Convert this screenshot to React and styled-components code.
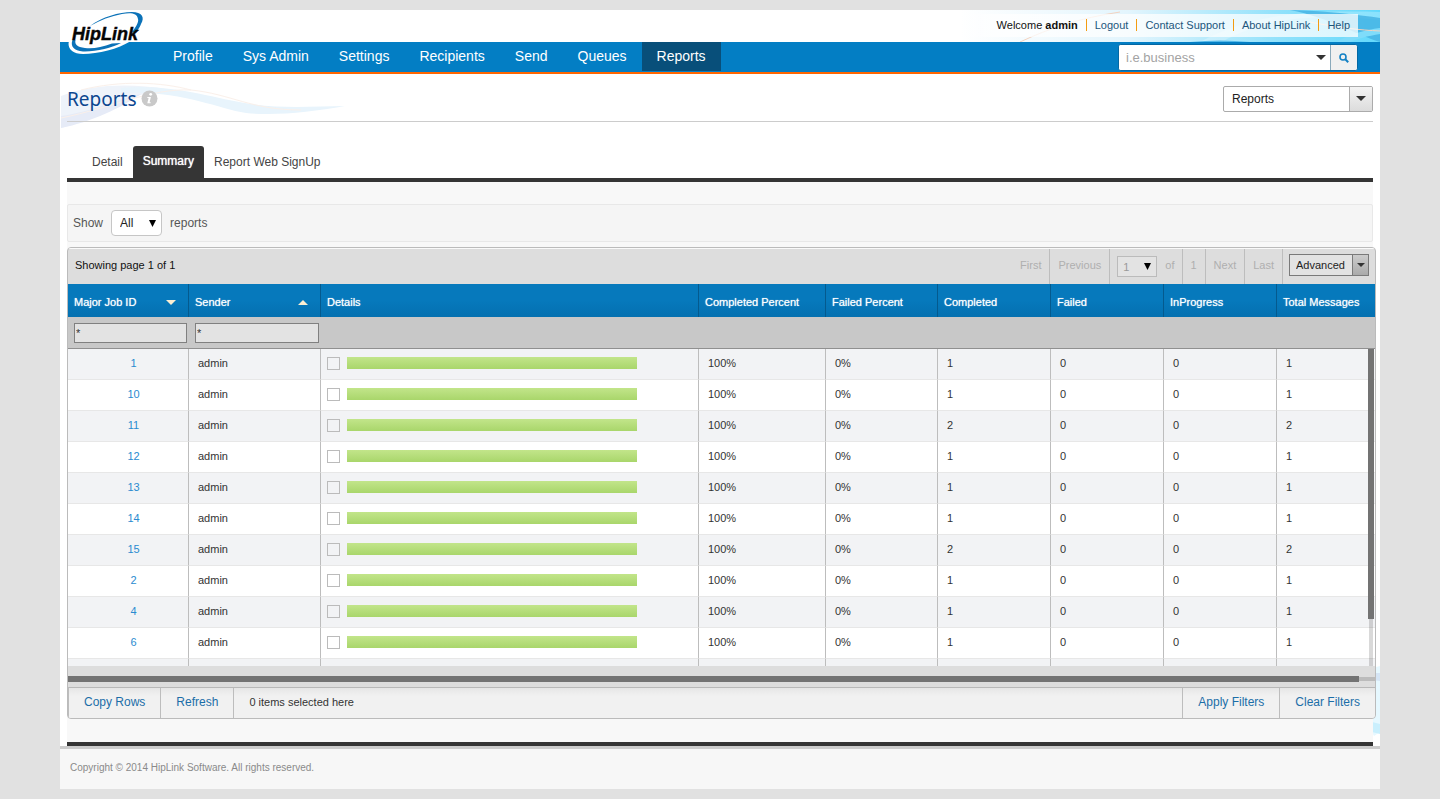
import React from "react";
import styled, { createGlobalStyle, css } from "styled-components";

const GlobalStyle = createGlobalStyle`
  * { box-sizing: border-box; }
  body {
    margin: 0;
    background: #e1e1e1;
    font-family: "Liberation Sans", Arial, Helvetica, sans-serif;
    font-size: 12px;
    color: #333;
  }
  button, input, select { font-family: inherit; margin: 0; }
  a { text-decoration: none; }
`;

const Shell = styled.div`
  margin: 10px 60px;
  background: #fff;
`;

/* Header */
const Header = styled.header`
  position: relative;
`;

const TopStrip = styled.div`
  position: relative;
  height: 32px;
  display: flex;
  justify-content: flex-end;
  padding: 4px 22px 5px 0;
`;

const TopWave = styled.svg`
  position: absolute;
  top: 0;
  right: 0;
  width: 420px;
  height: 32px;
`;

const UserLinks = styled.nav`
  position: relative;
  display: flex;
  align-items: center;
  padding: 0 8px 2px 40px;
  font-size: 11px;
  background: linear-gradient(to right, rgba(255, 255, 255, 0), rgba(255, 255, 255, 0.75) 40px);
`;

const Welcome = styled.span`
  color: #111;
  padding-right: 8px;
`;

const UserLink = styled.a`
  color: #1c567c;
  line-height: 12px;
  padding: 0 8px;
  border-left: 1px solid #f39c12;
  &:last-child { padding-right: 0; }
`;

const Logo = styled.svg`
  position: absolute;
  top: 0;
  left: 8px;
  width: 80px;
  height: 46px;
`;

const NavBar = styled.div`
  display: flex;
  justify-content: space-between;
  height: 32px;
  background: #037ec4;
  border-bottom: 2px solid #ff6600;
  padding: 0 22px 0 98px;
`;

const MainNav = styled.nav`
  display: flex;
  height: 29px;
`;

const NavLink = styled.a`
  padding: 0 15px;
  font-size: 14px;
  line-height: 29px;
  color: #fff;
  background: ${(p) => (p.$active ? "#084f7a" : "transparent")};
`;

const Search = styled.form`
  display: flex;
  height: 27px;
  margin-top: 2px;
  width: 240px;
  border: 1px solid #0468a3;
  border-radius: 3px;
  overflow: hidden;
  background: #fff;
`;

const SearchInput = styled.input`
  flex: 1;
  min-width: 0;
  border: 0;
  padding: 0 0 0 7px;
  font-size: 13px;
  &::placeholder { color: #a3a3a3; opacity: 1; }
`;

const IconButton = styled.button`
  display: flex;
  align-items: center;
  justify-content: center;
  width: ${(p) => (p.$wide ? 27 : 18)}px;
  padding: 0;
  border: 0;
  background: #fff;
  ${(p) => p.$wide && css`
    background: #f0f0f0;
    border-left: 1px solid #8aa9bb;
  `}
`;

/* Page title */
const TitleArea = styled.div`
  position: relative;
  padding: 0 7px;
`;

const TitleWave = styled.svg`
  position: absolute;
  top: 4px;
  left: 1px;
  width: 290px;
  height: 50px;
`;

const TitleRow = styled.div`
  position: relative;
  display: flex;
  justify-content: space-between;
  align-items: center;
  height: 48px;
  padding-top: 2px;
  border-bottom: 1px solid #ccc;
`;

const TitleGroup = styled.div`
  display: flex;
  align-items: center;
  gap: 4px;
`;

const Title = styled.h1`
  margin: 0;
  font-family: "Noto Sans", "Open Sans", sans-serif;
  font-size: 19px;
  line-height: 24px;
  font-weight: 400;
  color: #0b468f;
`;

const SelectBox = styled.div`
  position: relative;
  display: flex;
  width: ${(p) => p.$width}px;
  height: ${(p) => p.$height}px;
  border: 1px solid ${(p) => p.$line || "#ababab"};
  border-radius: ${(p) => p.$radius || 0}px;
  background: ${(p) => p.$fill || "#fff"};
  overflow: hidden;
`;

const Select = styled.select`
  appearance: none;
  width: 100%;
  border: 0;
  background: transparent;
  padding: 0 20px 0 ${(p) => p.$inset}px;
  font-size: ${(p) => p.$size}px;
  color: ${(p) => p.$color || "#222"};
`;

const ArrowCap = styled.span`
  position: absolute;
  top: 0;
  right: 0;
  bottom: 0;
  width: ${(p) => p.$width}px;
  display: flex;
  align-items: center;
  justify-content: center;
  pointer-events: none;
  ${(p) => p.$raised && css`
    border-left: 1px solid ${p.$line};
    background: ${p.$raised};
  `}
`;

/* Tabs */
const Tabs = styled.nav`
  display: flex;
  align-items: flex-end;
  margin: 24px 7px 0;
  padding-left: 15px;
  border-bottom: 4px solid #353535;
`;

const Tab = styled.a`
  padding: 0 10px;
  height: 32px;
  line-height: 33px;
  font-size: 12px;
  color: #444;
`;

const ActiveTab = styled(Tab)`
  line-height: 30px;
  color: #fff;
  background: #353535;
  border-radius: 3px 3px 0 0;
  text-shadow: 0 0 1px #fff;
`;

/* Content */
const Content = styled.main`
  position: relative;
  padding: 0 7px;
`;

const SideWave = styled.svg`
  position: absolute;
  right: 0;
  bottom: 10px;
  width: 8px;
  height: 70px;
`;

const Panel = styled.section`
  position: relative;
  padding: 22px 0 23px;
  background: #f8f8f8;
  border-bottom: 4px solid #353535;
`;

const ShowBar = styled.div`
  display: flex;
  align-items: center;
  gap: 8px;
  height: 38px;
  padding-left: 5px;
  color: #555;
  background: #f5f5f5;
  border: 1px solid #e8e8e8;
  border-radius: 2px;
`;

const Grid = styled.div`
  margin: 5px -3px 0 0;
  border: 1px solid #bbb;
  border-radius: 4px;
  background: #ddd;
  overflow: hidden;
`;

const GridTop = styled.div`
  display: flex;
  justify-content: space-between;
  height: 36px;
  font-size: 11px;
  border-top: 1px solid #fafafa;
`;

const PageInfo = styled.span`
  padding-left: 7px;
  line-height: 33px;
  color: #111;
`;

const Pager = styled.div`
  display: flex;
  padding-right: 6px;
  color: #afafaf;
`;

const PagerCell = styled.span`
  display: flex;
  align-items: center;
  gap: 8px;
  padding: 0 8px 3px 7px;
  border-right: 1px solid #bdbdbd;
`;

const PagerButton = styled.button`
  padding: 0 8px 3px;
  border: 0;
  border-right: 1px solid #bdbdbd;
  background: none;
  font-size: 11px;
  color: #afafaf;
`;

const PageSelectSlot = styled.span`
  padding-top: 3px;
`;

const AdvancedWrap = styled.div`
  padding: 5px 0 0 6px;
`;

const TableArea = styled.div`
  position: relative;
`;

const Table = styled.table`
  width: 100%;
  table-layout: fixed;
  border-collapse: separate;
  border-spacing: 0;
  font-size: 11px;
`;

const Th = styled.th`
  height: 33px;
  padding: 3px 12px 0 6px;
  text-align: left;
  font-weight: 400;
  white-space: nowrap;
  color: #fff;
  text-shadow: 0 0 1px rgba(255, 255, 255, 0.8);
  background: linear-gradient(#0679bc 50%, #0470b0);
  border-right: 1px solid #045a8e;
  &:last-child { border-right: 0; padding-right: 0; }
`;

const ThInner = styled.span`
  display: flex;
  justify-content: space-between;
  align-items: center;
`;

const FilterCell = styled.td`
  height: 32px;
  padding: 0 2px 0 6px;
  background: #c8c8c8;
  border-bottom: 1px solid #909090;
`;

const FilterInput = styled.input`
  display: block;
  width: 100%;
  height: 20px;
  padding: 0 1px;
  border: 1px solid #808080;
  border-radius: 0;
  background: #e3e3e3;
  font-size: 11px;
  color: #333;
`;

const Row = styled.tr`
  background: ${(p) => (p.$odd ? "#f2f3f5" : "#fff")};
`;

const Td = styled.td`
  height: 31px;
  padding: 0 9px 2px;
  color: #333;
  border-right: 1px solid #bdbdbd;
  border-bottom: 1px solid #e7e7e7;
  &:first-child { padding-left: 20px; text-align: center; }
  &:last-child { border-right: 0; }
  a { color: #2a8bd0; }
`;

const PeekTd = styled.td`
  height: 7px;
  padding: 0;
  border-right: 1px solid #bdbdbd;
  &:last-child { border-right: 0; }
`;

const DetailsTd = styled(Td)`
  padding: 0 6px 2px;
`;

const DetailLine = styled.div`
  display: flex;
  align-items: flex-end;
  gap: 7px;
  height: 13px;
`;

const Check = styled.input`
  appearance: none;
  width: 13px;
  height: 13px;
  border: 1px solid #bbb;
  background: transparent;
`;

const CheckSlot = styled.label`
  display: flex;
`;

const Bar = styled.span`
  align-self: flex-start;
  width: 290px;
  height: 12px;
  background: linear-gradient(#c2e58a, #a9d66b);
`;

const VTrack = styled.span`
  position: absolute;
  right: 2px;
  top: 65px;
  bottom: 0;
  width: 4px;
  background: rgba(0, 0, 0, 0.15);
`;

const VThumb = styled.span`
  position: absolute;
  right: 1px;
  top: 65px;
  width: 6px;
  height: 270px;
  background: #737373;
`;

const HScroll = styled.div`
  display: flex;
  align-items: center;
  height: 21px;
  padding-top: 5px;
`;

const HThumb = styled.span`
  flex: 1;
  height: 6px;
  background: #737373;
`;

const HRest = styled.span`
  width: 16px;
  height: 4px;
  background: #bbb;
`;

const GridFooter = styled.div`
  display: flex;
  height: 31px;
  border-top: 1px solid #b8b8b8;
  border-left: 1px solid #bdbdbd;
  background: linear-gradient(#e6e6e6, #f1f1f1 8px);
`;

const FooterButton = styled.button`
  padding: 0 15px 2px;
  border: 0;
  background: none;
  font-size: 12px;
  color: #1b6ea8;
  border-${(p) => p.$side}: 1px solid #bdbdbd;
`;

const Selected = styled.span`
  flex: 1;
  padding-left: 15px;
  font-size: 11px;
  line-height: 28px;
`;

const PageFooter = styled.footer`
  height: 43px;
  padding-left: 10px;
  border-top: 3px solid #ccc;
  background: #f7f7f7;
  font-size: 10px;
  line-height: 38px;
  color: #8a8a8a;
`;

const Triangle = ({ up, width = 10, height = 5, color = "#333" }) => (
  <svg width={width} height={height} viewBox="0 0 10 5" preserveAspectRatio="none" aria-hidden="true">
    <path d={up ? "M0 5 L5 0 L10 5Z" : "M0 0 H10 L5 5Z"} fill={color} />
  </svg>
);

const HipLinkLogo = () => (
  <Logo viewBox="68 10 80 46" role="img" aria-label="HipLink">
    <path
      d="M70 38 C66 46 70 54 83 54 C98 54 118 49 131 41 L136 32 L120 20 L84 26Z"
      fill="#fff"
    />
    <path
      d="M90 26 C102 17 119 12 132 12 C142 12 145 17 141 24 C140 27 138 30 135 33 L132 32 C136 27 139 22 138 19 C137 13 131 12.600 122 14 C111 16 100 20 90 26Z"
      fill="#0b72b8"
    />
    <path
      d="M72.500 40 C70 46 74 51 83 51.500 C95 52 112 48 121 43 L112 43.500 C102 47.500 92 49 85 48 C77 47 74.500 44.500 75.500 40Z"
      fill="#0b72b8"
    />
    <text
      x="72"
      y="40"
      fontFamily='"Liberation Sans", Arial, sans-serif'
      fontSize="18"
      fontWeight="700"
      fontStyle="italic"
      fill="#050505"
      stroke="#050505"
      strokeWidth="0.4"
    >
      HipLink
    </text>
  </Logo>
);

const navItems = ["Profile", "Sys Admin", "Settings", "Recipients", "Send", "Queues", "Reports"];

const columns = [
  { label: "Major Job ID", width: 121, sort: "down" },
  { label: "Sender", width: 132, sort: "up" },
  { label: "Details" },
  { label: "Completed Percent", width: 127 },
  { label: "Failed Percent", width: 112 },
  { label: "Completed", width: 113 },
  { label: "Failed", width: 113 },
  { label: "InProgress", width: 113 },
  { label: "Total Messages", width: 98 },
];

const jobs = [
  { id: 1, count: 1 },
  { id: 10, count: 1 },
  { id: 11, count: 2 },
  { id: 12, count: 1 },
  { id: 13, count: 1 },
  { id: 14, count: 1 },
  { id: 15, count: 2 },
  { id: 2, count: 1 },
  { id: 4, count: 1 },
  { id: 6, count: 1 },
];

export default function App() {
  return (
    <>
      <GlobalStyle />
      <Shell>
        <Header>
          <TopStrip>
            <TopWave viewBox="0 0 420 32" preserveAspectRatio="none" aria-hidden="true">
              <defs>
                <linearGradient id="sky" x1="0" x2="1">
                  <stop offset="0" stopColor="#fff" />
                  <stop offset="0.4" stopColor="#e3f5fd" />
                  <stop offset="0.75" stopColor="#93e2fb" />
                  <stop offset="1" stopColor="#62d9fc" />
                </linearGradient>
              </defs>
              <rect width="420" height="32" fill="url(#sky)" />
              <path d="M240 32 C290 5 340 0 420 2 V10 C350 2 300 10 262 32Z" fill="#fff" opacity="0.25" />
              <path d="M330 0 C370 1 400 5 420 8 V32 C395 24 370 8 330 0Z" fill="#46b4e4" opacity="0.85" />
              <path d="M376 32 C390 24 405 20 420 18 V24 C408 26 396 29 390 32Z" fill="#7fdcfa" />
              <path d="M230 32 C250 30 270 30 290 32Z" fill="#53b8e8" />
              <path d="M60 32 C90 18 120 8 160 2 M350 12 C380 18 400 20 420 21" stroke="#f3d3c0" strokeWidth="1" fill="none" />
            </TopWave>
            <UserLinks>
              <Welcome>
                Welcome <b>admin</b>
              </Welcome>
              <UserLink href="#logout">Logout</UserLink>
              <UserLink href="#support">Contact Support</UserLink>
              <UserLink href="#about">About HipLink</UserLink>
              <UserLink href="#help">Help</UserLink>
            </UserLinks>
          </TopStrip>
          <NavBar>
            <MainNav>
              {navItems.map((item) => (
                <NavLink key={item} href={"#" + item} $active={item === "Reports"}>
                  {item}
                </NavLink>
              ))}
            </MainNav>
            <Search>
              <SearchInput type="text" placeholder="i.e.business" aria-label="Search" />
              <IconButton type="button" aria-label="Search options">
                <Triangle />
              </IconButton>
              <IconButton type="submit" $wide aria-label="Search">
                <svg width="10" height="10" viewBox="0 0 10 10" aria-hidden="true">
                  <circle cx="4" cy="4" r="3" fill="none" stroke="#1481c4" strokeWidth="1.6" />
                  <path d="M6.3 6.3 L9.2 9.2" stroke="#1481c4" strokeWidth="2" />
                </svg>
              </IconButton>
            </Search>
          </NavBar>
          <HipLinkLogo />
        </Header>

        <TitleArea>
          <TitleWave viewBox="0 0 290 50" aria-hidden="true">
            <path d="M0 18 C30 6 70 5 105 11 C70 14 40 40 0 50Z" fill="#eef3fa" />
            <path d="M0 50 V38 C30 34 60 20 80 16 C60 30 30 44 0 50Z" fill="#e6ebf7" />
            <path d="M60 10 C110 5 150 20 190 26 C225 31 255 28 284 28 C250 34 215 38 185 35 C155 30 120 12 60 15Z" fill="#e8f4fc" />
            <path d="M0 40 C50 30 90 10 130 12 C170 16 190 32 240 32" stroke="#faf0ea" strokeWidth="1" fill="none" />
            <path d="M20 12 C60 2 100 4 130 12" stroke="#faf0ea" strokeWidth="1" fill="none" />
          </TitleWave>
          <TitleRow>
            <TitleGroup>
              <Title>Reports</Title>
              <svg width="17" height="17" viewBox="0 0 17 17" role="img" aria-label="Information">
                <circle cx="8.5" cy="8.5" r="8" fill="#c9c9c9" />
                <circle cx="9.7" cy="4.3" r="1.4" fill="#fff" />
                <path d="M6.4 7 H9.9 L8.6 12.2 H9.8 L9.5 13.2 H6.3 L7.6 8 H6.2Z" fill="#fff" />
              </svg>
            </TitleGroup>
            <SelectBox $width={150} $height={26} $radius={2}>
              <Select aria-label="Section" $inset={8} $size={12}>
                <option>Reports</option>
              </Select>
              <ArrowCap $width={23} $line="#ababab" $raised="linear-gradient(#f4f4f4, #dcdcdc)">
                <Triangle />
              </ArrowCap>
            </SelectBox>
          </TitleRow>
        </TitleArea>

        <Tabs>
          <Tab href="#detail">Detail</Tab>
          <ActiveTab href="#summary">Summary</ActiveTab>
          <Tab href="#websignup">Report Web SignUp</Tab>
        </Tabs>

        <Content>
          <SideWave viewBox="0 0 8 70" preserveAspectRatio="none" aria-hidden="true">
            <path d="M0 2 L8 0 V66 L2 70 L0 66Z" fill="#e6f8ff" />
            <path d="M0 7 H8 V15 L0 14Z" fill="#d5e5f5" />
            <path d="M0 56 L8 58 V68 L0 66Z" fill="#c9effd" />
          </SideWave>
          <Panel>
            <ShowBar>
              <label htmlFor="show">Show</label>
              <SelectBox $width={51} $height={26} $radius={4} $line="#c6c6c6">
                <Select id="show" $inset={8} $size={12}>
                  <option>All</option>
                </Select>
                <ArrowCap $width={18}>
                  <Triangle width={7} height={7} color="#000" />
                </ArrowCap>
              </SelectBox>
              <span>reports</span>
            </ShowBar>

            <Grid>
              <GridTop>
                <PageInfo>Showing page 1 of 1</PageInfo>
                <Pager>
                  <PagerButton type="button">First</PagerButton>
                  <PagerButton type="button">Previous</PagerButton>
                  <PagerCell>
                    <PageSelectSlot>
                      <SelectBox $width={40} $height={21} $line="#bbb" $fill="#e3e3e3">
                        <Select aria-label="Page" $inset={5} $size={11} $color="#999">
                          <option>1</option>
                        </Select>
                        <ArrowCap $width={18}>
                          <Triangle width={7} height={7} color="#000" />
                        </ArrowCap>
                      </SelectBox>
                    </PageSelectSlot>
                    of
                  </PagerCell>
                  <PagerCell>1</PagerCell>
                  <PagerButton type="button">Next</PagerButton>
                  <PagerButton type="button">Last</PagerButton>
                  <AdvancedWrap>
                    <SelectBox $width={80} $height={22} $line="#7a7a7a" $fill="#e3e3e3">
                      <Select aria-label="Advanced options" $inset={6} $size={11}>
                        <option>Advanced</option>
                      </Select>
                      <ArrowCap $width={16} $line="#7a7a7a" $raised="linear-gradient(#ccc, #aaa)">
                        <Triangle width={8} height={4} />
                      </ArrowCap>
                    </SelectBox>
                  </AdvancedWrap>
                </Pager>
              </GridTop>

              <TableArea>
                <Table>
                  <colgroup>
                    {columns.map((c) => (
                      <col key={c.label} width={c.width} />
                    ))}
                  </colgroup>
                  <thead>
                    <tr>
                      {columns.map((c) => (
                        <Th key={c.label} scope="col">
                          <ThInner>
                            {c.label}
                            {c.sort && <Triangle up={c.sort === "up"} color="#fbeed2" />}
                          </ThInner>
                        </Th>
                      ))}
                    </tr>
                    <tr>
                      <FilterCell>
                        <FilterInput defaultValue="*" aria-label="Filter by job ID" />
                      </FilterCell>
                      <FilterCell>
                        <FilterInput defaultValue="*" aria-label="Filter by sender" />
                      </FilterCell>
                      <FilterCell colSpan={7} />
                    </tr>
                  </thead>
                  <tbody>
                    {jobs.map((job, i) => (
                      <Row key={job.id} $odd={i % 2 === 0}>
                        <Td>
                          <a href={"#job-" + job.id}>{job.id}</a>
                        </Td>
                        <Td>admin</Td>
                        <DetailsTd>
                          <DetailLine>
                            <CheckSlot>
                              <Check type="checkbox" aria-label={"Select job " + job.id} />
                            </CheckSlot>
                            <Bar />
                          </DetailLine>
                        </DetailsTd>
                        <Td>100%</Td>
                        <Td>0%</Td>
                        <Td>{job.count}</Td>
                        <Td>0</Td>
                        <Td>0</Td>
                        <Td>{job.count}</Td>
                      </Row>
                    ))}
                    <Row $odd>
                      {columns.map((c) => (
                        <PeekTd key={c.label} />
                      ))}
                    </Row>
                  </tbody>
                </Table>
                <VTrack />
                <VThumb />
              </TableArea>

              <HScroll>
                <HThumb />
                <HRest />
              </HScroll>

              <GridFooter>
                <FooterButton type="button" $side="right">Copy Rows</FooterButton>
                <FooterButton type="button" $side="right">Refresh</FooterButton>
                <Selected>0 items selected here</Selected>
                <FooterButton type="button" $side="left">Apply Filters</FooterButton>
                <FooterButton type="button" $side="left">Clear Filters</FooterButton>
              </GridFooter>
            </Grid>
          </Panel>
        </Content>

        <PageFooter>Copyright © 2014 HipLink Software. All rights reserved.</PageFooter>
      </Shell>
    </>
  );
}
